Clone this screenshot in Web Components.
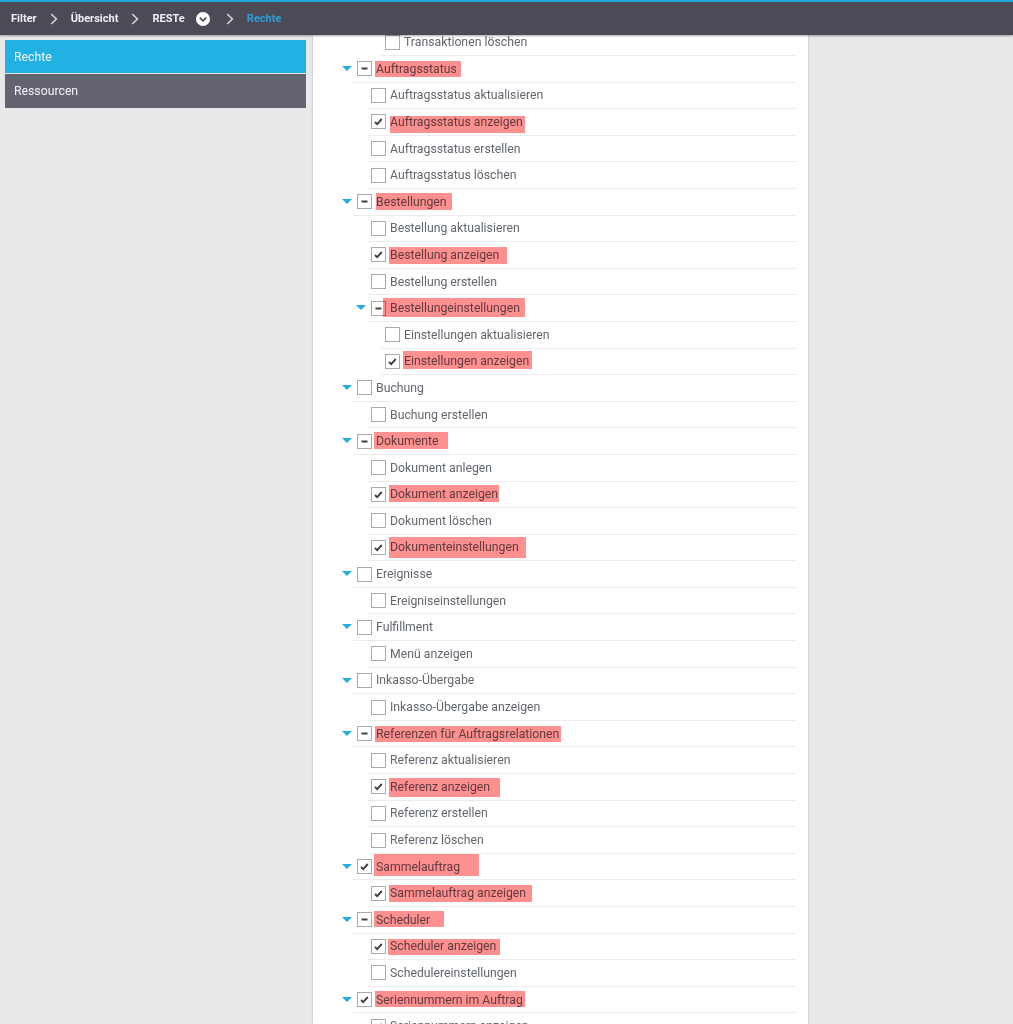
<!DOCTYPE html>
<html lang="de"><head><meta charset="utf-8"><title>Rechte</title>
<style>
html,body{margin:0;padding:0;height:1024px;overflow:hidden;background:#e8e9eb;font-family:Roboto,"Liberation Sans",sans-serif}
</style></head><body>
<app-shell>
<top-bar slot="top">
  <crumb-item>Filter</crumb-item><crumb-item sep>Übersicht</crumb-item><crumb-item sep menu>RESTe</crumb-item><crumb-item sep current>Rechte</crumb-item>
</top-bar>
<side-nav slot="side">
  <nav-tab active>Rechte</nav-tab><nav-tab>Ressourcen</nav-tab>
</side-nav>
<tree-view slot="main"></tree-view>
</app-shell>
<script>
const def=(n,css,html)=>{customElements.define(n,class extends HTMLElement{constructor(){super();this.attachShadow({mode:'open'}).innerHTML=`<style>${css}</style>${html}`}})};
def('app-shell',`:host{display:grid;grid-template-columns:313px 495px 205px;grid-template-rows:35px 989px;height:1024px;overflow:hidden;color:#5d6270}
.t{grid-column:1/4;grid-row:1;position:relative;z-index:2}
.s{grid-column:1;grid-row:2;min-height:0}
.m{grid-column:2;grid-row:2;background:#fff;box-shadow:0 0 2px rgba(0,0,0,.28);overflow:hidden;min-height:0}`,
`<div class="t"><slot name="top"></slot></div><div class="s"><slot name="side"></slot></div><div class="m"><slot name="main"></slot></div>`);
def('top-bar',`:host{display:flex;align-items:center;box-sizing:border-box;height:35px;background:#4a4b57;border-top:2px solid #1fa9dc;padding:0 0 0 11px;box-shadow:0 1px 2px rgba(0,0,0,.35)}`,`<slot></slot>`);
customElements.define('crumb-item',class extends HTMLElement{constructor(){super();const s=this.hasAttribute('sep'),m=this.hasAttribute('menu');
this.attachShadow({mode:'open'}).innerHTML=`<style>:host{display:flex;align-items:center;font:700 11px/16px Roboto,sans-serif;letter-spacing:.02px;color:#f1f1f3}
:host([current]){color:#2f9fd3}
.c{margin:0 13px;display:block}.m{margin-left:11px;margin-right:3px;display:block}</style>`+
(s?`<svg class="c" width="8" height="12" viewBox="0 0 8 12"><path d="M1.2 1 6.4 6 1.2 11" fill="none" stroke="#d5d5d9" stroke-width="1.6"/></svg>`:'')+`<slot></slot>`+
(m?`<svg class="m" width="14" height="14" viewBox="0 0 14 14"><circle cx="7" cy="7" r="7" fill="#fff"/><path d="M3.8 5.6 7 8.8l3.2-3.2" fill="none" stroke="#4a4b57" stroke-width="1.7"/></svg>`:'');}});
def('side-nav',`:host{display:flex;flex-direction:column;gap:1px;padding:5px 7px 0 5px}`,`<slot></slot>`);
def('nav-tab',`:host{display:block;box-sizing:border-box;height:34px;padding-left:9px;background:#63646f;color:#f4f4f6;font:400 12.25px/34px Roboto,sans-serif}
:host([active]){background:#21b1e2;height:33px}`,`<slot></slot>`);
customElements.define('tree-row',class extends HTMLElement{constructor(){super();
const d=+this.getAttribute('depth'),st=this.getAttribute('state')||'',arrow=this.hasAttribute('arrow'),h=this.getAttribute('hl');
let mark='';
if(h){const[l,r,t,b]=h.split(',').map(Number);mark=`<i class="hl" style="left:${l}px;width:${r-l}px;top:${t}px;height:${b-t}px"></i>`}
const glyph=st==='on'?`<svg width="15" height="15" viewBox="0 0 15 15"><path d="M4 8 6.2 10.2 10.8 5" fill="none" stroke="#3f404c" stroke-width="1.9"/></svg>`:st==='part'?`<svg width="15" height="15" viewBox="0 0 15 15"><path d="M4.5 7.5h6" stroke="#3f404c" stroke-width="2"/></svg>`:'';
this.attachShadow({mode:'open'}).innerHTML=`<style>
:host{display:block;height:26.6px;position:relative;box-sizing:border-box;padding-left:${40+14*d}px}
.r{display:flex;align-items:center;height:26.6px;box-sizing:border-box;border-bottom:1px solid #ececee;margin-right:12px;font:400 12.25px/16px Roboto,sans-serif;color:#62676f}
.a{position:absolute;left:${29+14*d}px;top:10px;width:0;height:0;border:5px solid transparent;border-top:5px solid #23aee0;border-bottom:0}
.b{flex:none;box-sizing:border-box;width:15px;height:15px;border:1px solid #a9a9b0;background:#fff;margin:0 4px;position:relative}
.b svg{position:absolute;left:-1px;top:-1px}
.hl{position:absolute;background:#ff9090;mix-blend-mode:multiply;display:block;pointer-events:none}
</style>${arrow?'<span class="a"></span>':''}<div class="r"><span class="b">${glyph}</span><slot></slot></div>${mark}`;}});
const R=[
[2,'','Transaktionen löschen'],
[0,'part','Auftragsstatus',1,[375,461,61,77]],
[1,'','Auftragsstatus aktualisieren'],
[1,'on','Auftragsstatus anzeigen',0,[389.5,525,116,133]],
[1,'','Auftragsstatus erstellen'],
[1,'','Auftragsstatus löschen'],
[0,'part','Bestellungen',1,[376,452,193,210]],
[1,'','Bestellung aktualisieren'],
[1,'on','Bestellung anzeigen',0,[389,507,247,264]],
[1,'','Bestellung erstellen'],
[1,'part','Bestellungeinstellungen',1,[383,525,298,317]],
[2,'','Einstellungen aktualisieren'],
[2,'on','Einstellungen anzeigen',0,[403,532,351,369]],
[0,'','Buchung',1],
[1,'','Buchung erstellen'],
[0,'part','Dokumente',1,[374,448,432,449]],
[1,'','Dokument anlegen'],
[1,'on','Dokument anzeigen',0,[389,499,485,502]],
[1,'','Dokument löschen'],
[1,'on','Dokumenteinstellungen',0,[389,526,537,558]],
[0,'','Ereignisse',1],
[1,'','Ereigniseinstellungen'],
[0,'','Fulfillment',1],
[1,'','Menü anzeigen'],
[0,'','Inkasso-Übergabe',1],
[1,'','Inkasso-Übergabe anzeigen'],
[0,'part','Referenzen für Auftragsrelationen',1,[375,561,726,742]],
[1,'','Referenz aktualisieren'],
[1,'on','Referenz anzeigen',0,[389,500,778,797]],
[1,'','Referenz erstellen'],
[1,'','Referenz löschen'],
[0,'on','Sammelauftrag',1,[374,479,854,876]],
[1,'on','Sammelauftrag anzeigen',0,[389,532,885,902]],
[0,'part','Scheduler',1,[374,444,911,927]],
[1,'on','Scheduler anzeigen',0,[388,500,939,955]],
[1,'','Schedulereinstellungen'],
[0,'on','Seriennummern im Auftrag',1,[375,525,991,1007]],
[1,'on','Seriennummern anzeigen']];
customElements.define('tree-view',class extends HTMLElement{constructor(){super();
const pitch=26.6,top0=29.4;
this.attachShadow({mode:'open'}).innerHTML=`<style>:host{display:block;margin-top:-5.6px}</style>`+R.map((r,i)=>{
let hl='';if(r[4]){const y=top0+pitch*i,[a,b,c,d]=r[4];hl=` hl="${a-313},${b-313},${(c-y).toFixed(1)},${(d-y).toFixed(1)}"`}
return `<tree-row depth="${r[0]}" state="${r[1]}"${r[3]?' arrow':''}${hl}>${r[2]}</tree-row>`}).join('');}});
</script>
</body></html>
